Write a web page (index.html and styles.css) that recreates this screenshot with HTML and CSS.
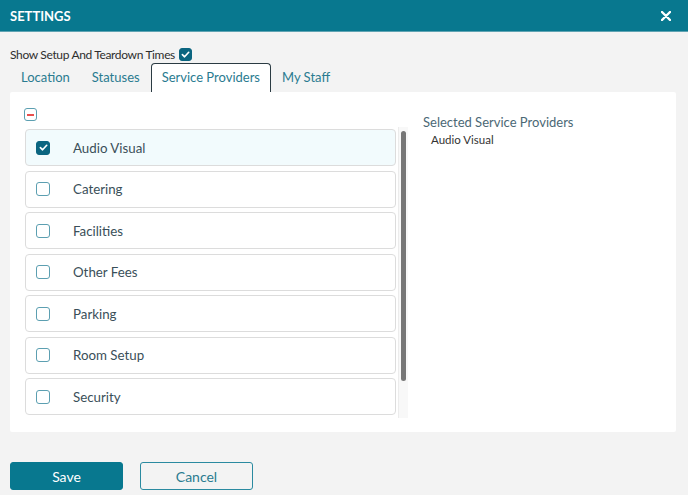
FILE: index.html
```html
<!DOCTYPE html>
<html lang="en">
<head>
<meta charset="utf-8">
<title>Settings</title>
<link rel="stylesheet" href="styles.css">
</head>
<body>
<header class="header">
  <h1 class="title">SETTINGS</h1>
  <button class="close" aria-label="Close">
    <svg width="10" height="10" viewBox="0 0 10 10"><path d="M1 1L9 9M9 1L1 9" stroke="#fff" stroke-width="2.4" stroke-linecap="round"/></svg>
  </button>
</header>
<main class="content">
  <div class="setup-row">
    <span>Show Setup And Teardown Times</span>
    <span class="cb cb-checked"><svg viewBox="0 0 12 12"><path d="M2.6 6.2L5 8.5L9.5 3.6" fill="none" stroke="#fff" stroke-width="1.8" stroke-linecap="round" stroke-linejoin="round"/></svg></span>
  </div>
  <nav class="tabs">
    <span class="tab">Location</span>
    <span class="tab">Statuses</span>
    <span class="tab tab-active">Service Providers</span>
    <span class="tab">My Staff</span>
  </nav>
  <section class="panel">
    <div class="left">
      <span class="cb cb-minus"><span class="minus"></span></span>
      <div class="list-wrap">
        <div class="list">
          <div class="item item-selected"><span class="cb cb-checked"><svg viewBox="0 0 12 12"><path d="M2.6 6.2L5 8.5L9.5 3.6" fill="none" stroke="#fff" stroke-width="1.8" stroke-linecap="round" stroke-linejoin="round"/></svg></span><span class="label">Audio Visual</span></div>
          <div class="item"><span class="cb"></span><span class="label">Catering</span></div>
          <div class="item"><span class="cb"></span><span class="label">Facilities</span></div>
          <div class="item"><span class="cb"></span><span class="label">Other Fees</span></div>
          <div class="item"><span class="cb"></span><span class="label">Parking</span></div>
          <div class="item"><span class="cb"></span><span class="label">Room Setup</span></div>
          <div class="item"><span class="cb"></span><span class="label">Security</span></div>
        </div>
        <div class="track"><div class="thumb"></div></div>
      </div>
    </div>
    <div class="right">
      <h2 class="sel-title">Selected Service Providers</h2>
      <div class="sel-item">Audio Visual</div>
    </div>
  </section>
  <div class="actions">
    <button class="btn btn-primary">Save</button>
    <button class="btn btn-outline">Cancel</button>
  </div>
</main>
</body>
</html>
```

FILE: styles.css
```css
* { box-sizing: border-box; }
html, body { margin: 0; padding: 0; }
body {
  width: 688px;
  height: 495px;
  overflow: hidden;
  background: #f3f3f3;
  font-family: Lato, "Open Sans", sans-serif;
  color: #333;
}
.header {
  height: 32px;
  background: #08788f;
  display: flex;
  align-items: center;
  justify-content: space-between;
  padding: 0 17px 0 10px;
  border-bottom: 1px solid #5fa3b2;
}
.title {
  margin: 0;
  font-size: 13px;
  font-weight: 700;
  color: #fff;
}
.close {
  background: none;
  border: 0;
  padding: 0;
  width: 10px;
  height: 10px;
  display: flex;
}
.content { padding: 0 12px 0 10px; }
.setup-row {
  margin-top: 14px;
  display: flex;
  align-items: center;
  gap: 4px;
  font-size: 12px;
  letter-spacing: -0.35px;
  color: #2e2e2e;
  height: 16px;
}
.cb {
  width: 13px;
  height: 13px;
  border: 1.5px solid #5c9fb1;
  border-radius: 3px;
  display: inline-flex;
  align-items: center;
  justify-content: center;
  flex: none;
  background: #fff;
}
.cb svg { width: 11px; height: 11px; }
.cb-checked { background: #0b6580; border-color: #0b6580; }
.tabs {
  display: flex;
  margin-top: 1px;
  height: 29px;
}
.tab {
  padding: 0 10px;
  border: 1.5px solid transparent;
  border-bottom: 0;
  font-size: 13px;
  color: #2a7b90;
  line-height: 27px;
}
.tab-active {
  border-color: #2b3b43;
  border-radius: 4px 4px 0 0;
  background: #fff;
}
.panel {
  background: #fff;
  height: 340px;
  border-radius: 2px;
  display: flex;
  padding: 16px 0 0 14px;
}
.left {
  width: 385px;
  display: flex;
  flex-direction: column;
}
.cb-minus { width: 13px; height: 13px; }
.minus { width: 7px; height: 2px; background: #e8504f; }
.list-wrap {
  margin-top: 6px;
  margin-left: 1px;
  height: 291px;
  display: flex;
}
.list {
  width: 373px;
  overflow: hidden;
  padding: 2px 2px 0 0;
  display: flex;
  flex-direction: column;
  gap: 4.5px;
}
.track {
  width: 10px;
  background: #f8f8f8;
  border-left: 1px solid #ececec;
  padding: 4px 2px 0 2px;
}
.thumb {
  width: 5px;
  height: 250px;
  background: #777;
  border-radius: 3px;
}
.item {
  flex: none;
  height: 37px;
  border: 1px solid #dcdcdc;
  border-radius: 4px;
  display: flex;
  align-items: center;
  padding-left: 10px;
  background: #fff;
}
.item-selected { background: #f2fbfd; }
.item .cb { width: 14px; height: 14px; margin-right: 23px; }
.label { font-size: 13.3px; color: #3a4f59; }
.right {
  padding-left: 14px;
  padding-top: 6px;
}
.sel-title {
  margin: 0;
  font-size: 13px;
  font-weight: 400;
  color: #4b6875;
  line-height: 17px;
}
.sel-item {
  margin-top: 2px;
  padding-left: 8px;
  font-size: 11.5px;
  color: #333;
}
.actions {
  margin-top: 30px;
  display: flex;
  gap: 17px;
}
.btn {
  width: 113px;
  height: 28px;
  border-radius: 3px;
  font-family: Lato, "Open Sans", sans-serif;
  font-size: 14px;
  cursor: pointer;
}
.btn-primary { background: #08788f; color: #fff; border: 1px solid #08788f; }
.btn-outline { background: transparent; color: #2a7b90; border: 1px solid #2a8aa0; }
```
